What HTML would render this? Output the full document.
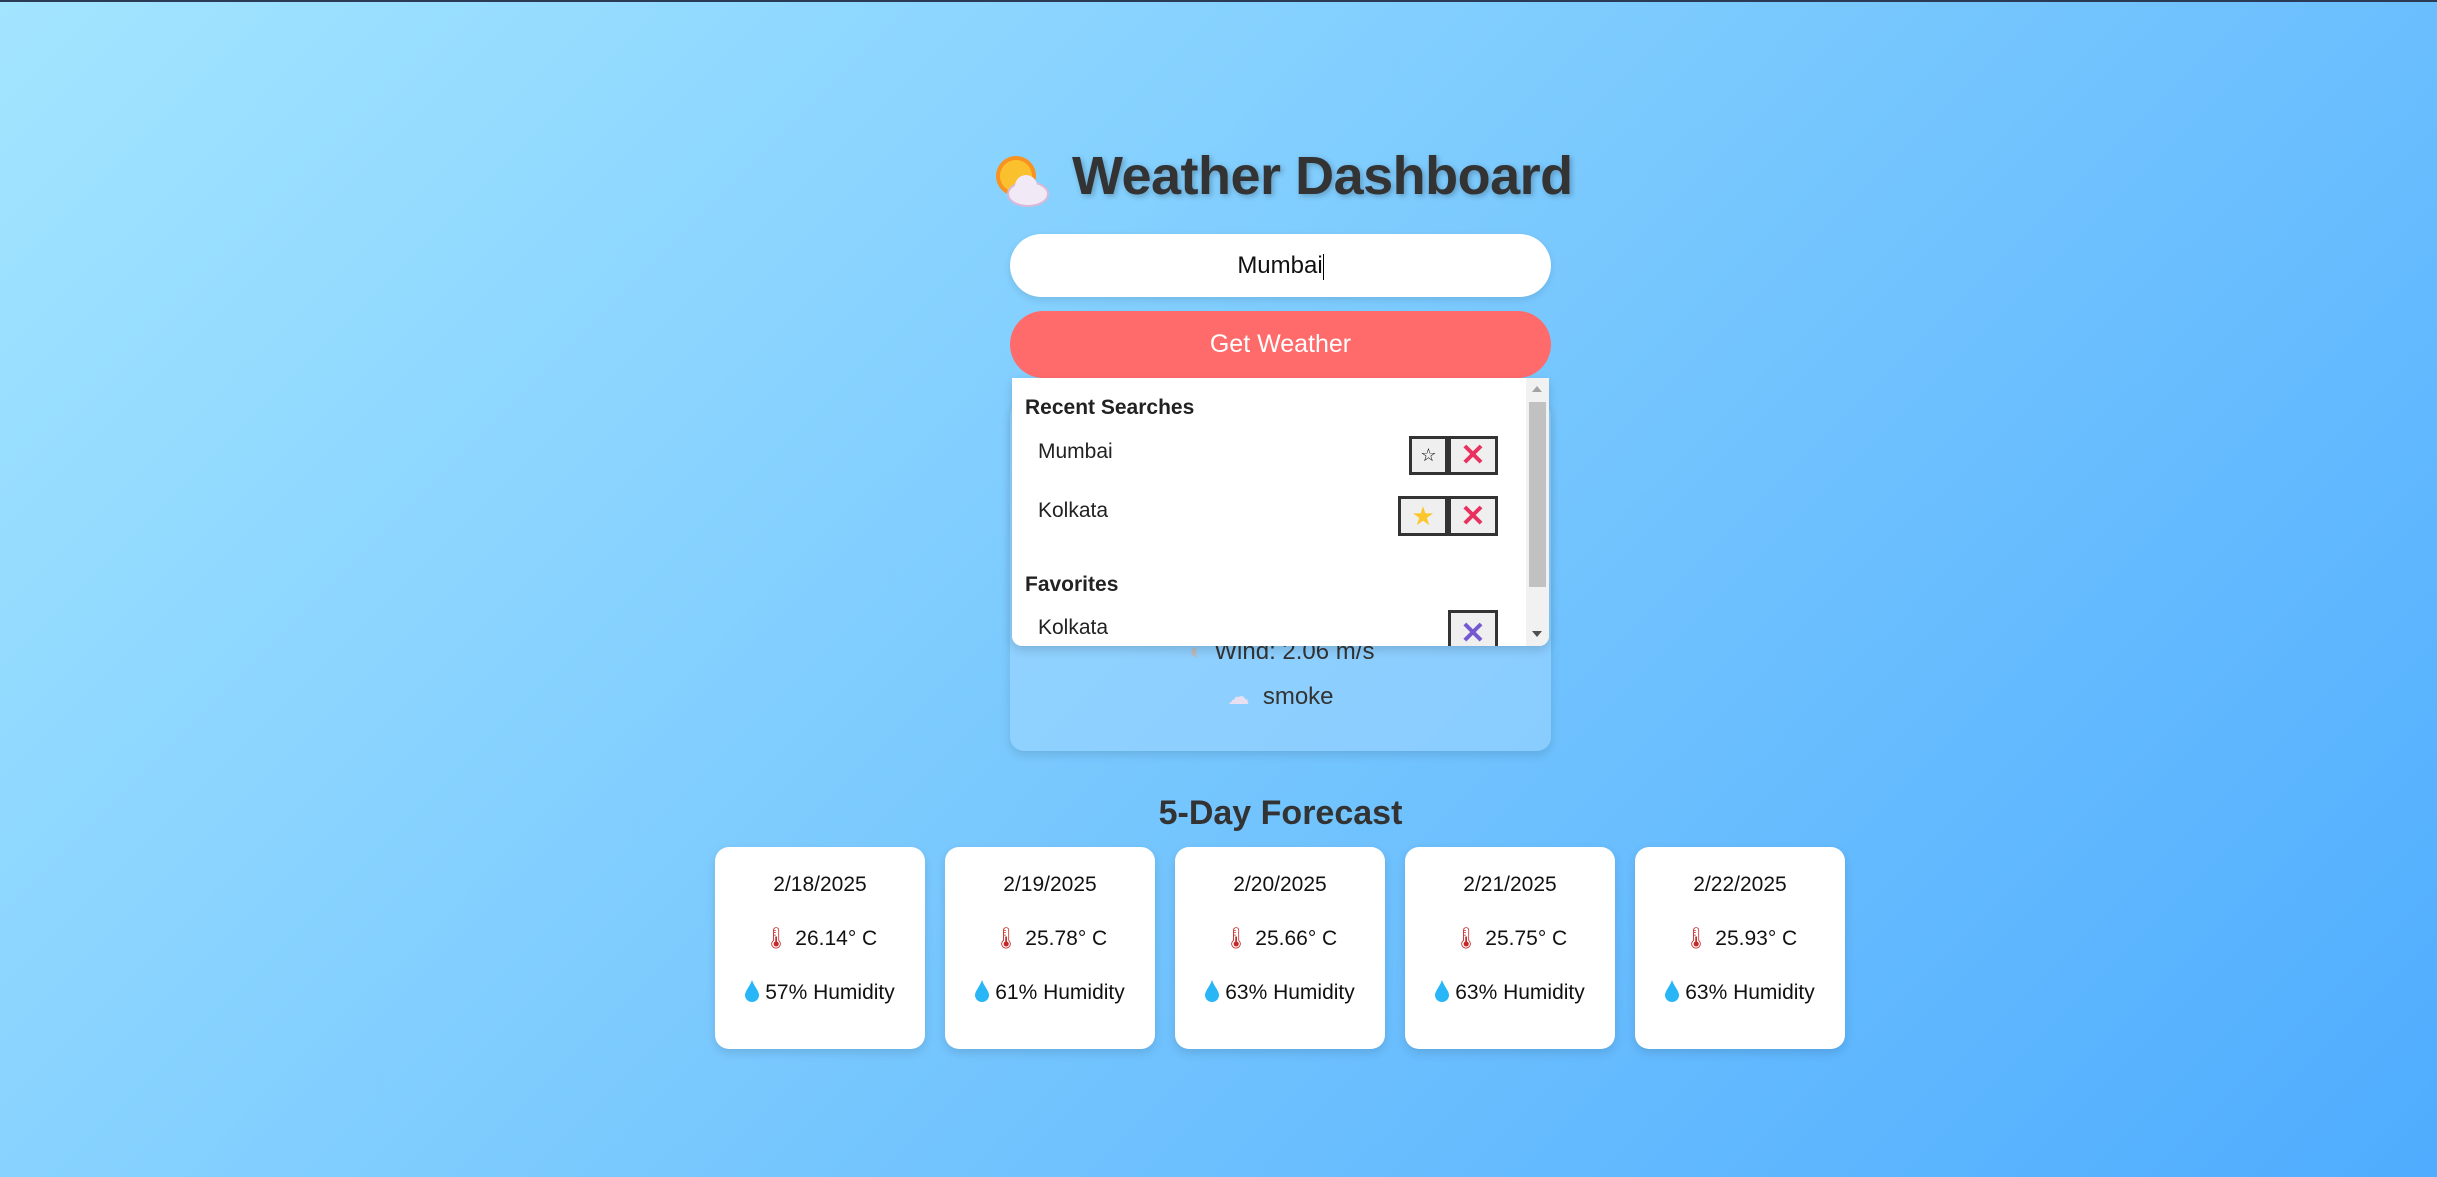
<!DOCTYPE html>
<html><head><meta charset="utf-8"><style>
*{box-sizing:border-box;margin:0;padding:0}
body{width:2437px;height:1177px;overflow:hidden;position:relative;background:linear-gradient(135deg,#a3e5ff 0%,#4facfe 100%);font-family:"Liberation Sans",sans-serif;color:#333;border-top:2px solid #2b3a55}
.abs{position:absolute}
h1{position:absolute;left:1072px;top:143px;font-size:54px;font-weight:bold;color:#333;text-shadow:2px 2px 6px rgba(0,0,0,.25);white-space:nowrap;letter-spacing:-0.5px}
.input{left:1010px;top:232px;width:541px;height:63px;background:#fff;border-radius:32px;box-shadow:0 3px 8px rgba(0,0,0,.1);text-align:center;font-size:24px;line-height:63px;color:#111}
.btn{left:1010px;top:309px;width:541px;height:67px;background:#ff6b6b;border-radius:34px;text-align:center;color:#fff;font-size:25px;line-height:67px}
.card{left:1010px;top:400px;width:541px;height:349px;background:rgba(160,215,255,.55);border-radius:14px;box-shadow:0 4px 10px rgba(0,0,0,.12)}
.dd{left:1012px;top:376px;width:537px;height:268px;background:#fff;border-radius:0 0 10px 10px;overflow:hidden;box-shadow:0 4px 10px rgba(0,0,0,.15)}
.sb{right:0;top:0;width:23px;height:268px;background:#f1f1f1}
.thumb{left:3px;top:24px;width:17px;height:185px;background:#c1c1c1}
.hd{font-weight:bold;font-size:21px;color:#222}
.it{font-size:21px;color:#222}
.b{position:absolute;background:#efefef;border:3px solid #333;display:flex;align-items:center;justify-content:center}
.fc{width:210px;height:202px;top:845px;background:#fff;border-radius:14px;box-shadow:0 4px 10px rgba(0,0,0,.12);font-size:21px;color:#111;text-align:center}
.fc div{position:absolute;left:0;width:100%}
.drop{display:inline-block;vertical-align:-3px;margin-right:6px}
</style></head><body>
<svg class="abs" style="left:990px;top:148px" width="62" height="62" viewBox="0 0 62 62">
<circle cx="26" cy="26" r="20" fill="#f7931e"/><circle cx="26" cy="26" r="16" fill="#fbc02d"/>
<ellipse cx="38" cy="44" rx="20" ry="12" fill="#f1e9f5" stroke="#d9b8d8" stroke-width="2"/><circle cx="36" cy="36" r="11" fill="#f1e9f5"/>
</svg>
<h1>Weather Dashboard</h1>
<div class="abs input">Mumbai<span style="display:inline-block;width:1px;height:26px;background:#000;vertical-align:middle"></span></div>
<div class="abs btn">Get Weather</div>
<div class="abs card">
<div class="abs" style="left:0;width:541px;top:236px;text-align:center;font-size:24px;color:#333"><span style="color:#bbb">◖</span>&nbsp; Wind: 2.06 m/s</div>
<div class="abs" style="left:0;width:541px;top:281px;text-align:center;font-size:24px;color:#333"><span style="font-size:22px;color:#e8e0f0">☁</span>&nbsp; smoke</div>
</div>
<div class="abs dd">
<div class="abs hd" style="left:13px;top:18px">Recent Searches</div>
<div class="abs it" style="left:26px;top:62px">Mumbai</div>
<div class="b" style="left:397px;top:58px;width:39px;height:39px;font-size:18px;color:#000">☆</div>
<div class="b" style="left:436px;top:58px;width:50px;height:39px;color:#e8315f;font-size:30px;font-weight:bold">✕</div>
<div class="abs it" style="left:26px;top:121px">Kolkata</div>
<div class="b" style="left:386px;top:118px;width:50px;height:40px;color:#fcc62d;font-size:26px">★</div>
<div class="b" style="left:436px;top:118px;width:50px;height:40px;color:#e8315f;font-size:30px;font-weight:bold">✕</div>
<div class="abs hd" style="left:13px;top:195px">Favorites</div>
<div class="abs it" style="left:26px;top:238px">Kolkata</div>
<div class="b" style="left:436px;top:232px;width:50px;height:44px;color:#7559d0;font-size:30px;font-weight:bold;border-bottom:none">✕</div>
<div class="abs sb"><div class="abs thumb"></div>
<div class="abs" style="left:6px;top:8px;border:5px solid transparent;border-bottom:6px solid #a3a3a3;border-top:0"></div>
<div class="abs" style="left:6px;top:253px;border:5px solid transparent;border-top:6px solid #505050;border-bottom:0"></div></div>
</div>
<div class="abs" style="left:1010px;width:541px;top:792px;text-align:center;font-size:34px;font-weight:bold;color:#333">5-Day Forecast</div>
<div class="abs fc" style="left:715px"><div style="top:26px">2/18/2025</div><div style="top:80px"><span style="color:#c62828">🌡︎</span> 26.14° C</div><div style="top:133px"><svg class="drop" width="14" height="22" viewBox="0 0 14 22"><path d="M7 0C5 6 0 11 0 15a7 7 0 0 0 14 0C14 11 9 6 7 0z" fill="#29b6f6"/></svg>57% Humidity</div></div>
<div class="abs fc" style="left:945px"><div style="top:26px">2/19/2025</div><div style="top:80px"><span style="color:#c62828">🌡︎</span> 25.78° C</div><div style="top:133px"><svg class="drop" width="14" height="22" viewBox="0 0 14 22"><path d="M7 0C5 6 0 11 0 15a7 7 0 0 0 14 0C14 11 9 6 7 0z" fill="#29b6f6"/></svg>61% Humidity</div></div>
<div class="abs fc" style="left:1175px"><div style="top:26px">2/20/2025</div><div style="top:80px"><span style="color:#c62828">🌡︎</span> 25.66° C</div><div style="top:133px"><svg class="drop" width="14" height="22" viewBox="0 0 14 22"><path d="M7 0C5 6 0 11 0 15a7 7 0 0 0 14 0C14 11 9 6 7 0z" fill="#29b6f6"/></svg>63% Humidity</div></div>
<div class="abs fc" style="left:1405px"><div style="top:26px">2/21/2025</div><div style="top:80px"><span style="color:#c62828">🌡︎</span> 25.75° C</div><div style="top:133px"><svg class="drop" width="14" height="22" viewBox="0 0 14 22"><path d="M7 0C5 6 0 11 0 15a7 7 0 0 0 14 0C14 11 9 6 7 0z" fill="#29b6f6"/></svg>63% Humidity</div></div>
<div class="abs fc" style="left:1635px"><div style="top:26px">2/22/2025</div><div style="top:80px"><span style="color:#c62828">🌡︎</span> 25.93° C</div><div style="top:133px"><svg class="drop" width="14" height="22" viewBox="0 0 14 22"><path d="M7 0C5 6 0 11 0 15a7 7 0 0 0 14 0C14 11 9 6 7 0z" fill="#29b6f6"/></svg>63% Humidity</div></div>
</body></html>
